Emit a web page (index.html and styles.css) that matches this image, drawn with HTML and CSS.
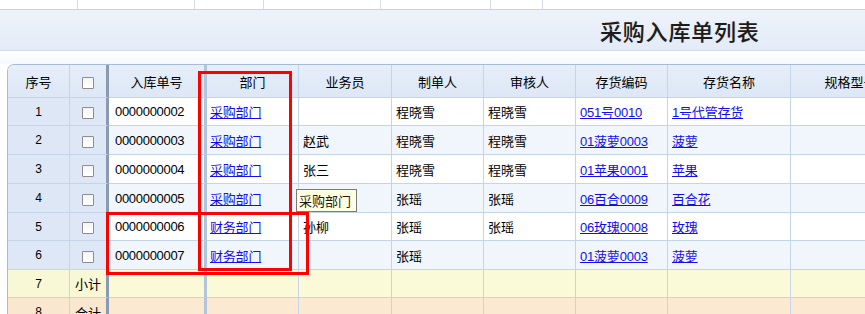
FILE: index.html
```html
<!DOCTYPE html>
<html lang="zh-CN">
<head>
<meta charset="utf-8">
<title>采购入库单列表</title>
<link rel="stylesheet" href="styles.css">
</head>
<body>
<div class="page">
  <div class="topstrip">
    <div class="ts c1"></div><div class="ts c2"></div><div class="ts c3"></div><div class="ts c4"></div><div class="ts c5"></div><div class="ts c6"></div><div class="ts rest"></div>
  </div>
  <div class="titlebar"><h1 class="title">采购入库单列表</h1></div>
  <div class="gap"></div>
  <div class="gridwrap">
    <table class="grid">
      <thead>
        <tr class="hrow">
          <th class="w-no">序号</th>
          <th class="w-cb sep-dark"><span class="cb"></span></th>
          <th class="w-code sep-light">入库单号</th>
          <th class="w-dept">部门</th>
          <th class="w-sales">业务员</th>
          <th class="w-maker">制单人</th>
          <th class="w-audit">审核人</th>
          <th class="w-inv">存货编码</th>
          <th class="w-name">存货名称</th>
          <th class="w-spec">规格型号</th>
        </tr>
      </thead>
      <tbody>
        <tr class="r odd h28">
          <td class="no">1</td><td class="cbc sep-dark"><span class="cb"></span></td>
          <td class="code sep-light">0000000002</td><td class="dept"><a href="#">采购部门</a></td>
          <td></td><td>程晓雪</td><td>程晓雪</td>
          <td><a href="#">051号0010</a></td><td><a href="#">1号代管存货</a></td><td></td>
        </tr>
        <tr class="r even h29">
          <td class="no">2</td><td class="cbc sep-dark"><span class="cb"></span></td>
          <td class="code sep-light">0000000003</td><td class="dept"><a href="#">采购部门</a></td>
          <td>赵武</td><td>程晓雪</td><td>程晓雪</td>
          <td><a href="#">01菠萝0003</a></td><td><a href="#">菠萝</a></td><td></td>
        </tr>
        <tr class="r odd h29">
          <td class="no">3</td><td class="cbc sep-dark"><span class="cb"></span></td>
          <td class="code sep-light">0000000004</td><td class="dept"><a href="#">采购部门</a></td>
          <td>张三</td><td>程晓雪</td><td>程晓雪</td>
          <td><a href="#">01苹果0001</a></td><td><a href="#">苹果</a></td><td></td>
        </tr>
        <tr class="r even h29">
          <td class="no">4</td><td class="cbc sep-dark"><span class="cb"></span></td>
          <td class="code sep-light">0000000005</td><td class="dept"><a href="#">采购部门</a></td>
          <td></td><td>张瑶</td><td>张瑶</td>
          <td><a href="#">06百合0009</a></td><td><a href="#">百合花</a></td><td></td>
        </tr>
        <tr class="r odd h28">
          <td class="no">5</td><td class="cbc sep-dark"><span class="cb"></span></td>
          <td class="code sep-light">0000000006</td><td class="dept"><a href="#">财务部门</a></td>
          <td>孙柳</td><td>张瑶</td><td>张瑶</td>
          <td><a href="#">06玫瑰0008</a></td><td><a href="#">玫瑰</a></td><td></td>
        </tr>
        <tr class="r even h29">
          <td class="no">6</td><td class="cbc sep-dark"><span class="cb"></span></td>
          <td class="code sep-light">0000000007</td><td class="dept"><a href="#">财务部门</a></td>
          <td></td><td>张瑶</td><td></td>
          <td><a href="#">01菠萝0003</a></td><td><a href="#">菠萝</a></td><td></td>
        </tr>
        <tr class="r sub h28">
          <td class="no">7</td><td class="cbc sep-dark">小计</td>
          <td class="sep-light"></td><td></td><td></td><td></td><td></td><td></td><td></td><td></td>
        </tr>
        <tr class="r total h29">
          <td class="no">8</td><td class="cbc sep-dark">合计</td>
          <td class="sep-light"></td><td></td><td></td><td></td><td></td><td></td><td></td><td></td>
        </tr>
      </tbody>
    </table>
  </div>
  <div class="mark mark-dept"></div>
  <div class="mark mark-fin"></div>
  <div class="tooltip">采购部门</div>
</div>
</body>
</html>
```
FILE: styles.css
```css
* { box-sizing: border-box; }
html, body { margin: 0; padding: 0; }
body {
  background: #ffffff;
  font-family: "Liberation Sans", "Noto Sans CJK SC", sans-serif;
  font-size: 13px;
  color: #000;
  overflow: hidden;
  width: 865px;
  height: 314px;
}
.page { position: relative; width: 865px; height: 314px; overflow: hidden; }

.topstrip { display: flex; height: 9px; background: #fff; }
.ts { height: 9px; border-right: 1px solid #d6dde7; flex: none; }
.c1 { width: 78px; }
.c2 { width: 117px; }
.c3 { width: 69px; }
.c4 { width: 117px; }
.c5 { width: 110px; }
.c6 { width: 52px; }
.ts.rest { flex: 1; border-right: none; }

.titlebar {
  height: 42px;
  border-top: 1px solid #c6d2e2;
  border-bottom: 1px solid #d3ddea;
  background: linear-gradient(#eef3fb, #e3ebf7);
  display: flex;
  align-items: center;
  padding-left: 600px;
}
.title {
  margin: 0;
  font-family: "Noto Sans CJK SC", sans-serif;
  font-size: 22px;
  font-weight: 500;
  color: #1c1c1c;
  line-height: 1;
  letter-spacing: 0.8px;
  text-shadow: 0 0 1px rgba(120,90,40,0.25);
}
.gap { height: 13px; background: linear-gradient(#ffffff, #f6f9fd); }

.gridwrap {
  margin-left: 7px;
  width: 920px;
  border: 1px solid #a7bbd3;
  border-right: none;
  border-bottom: none;
  border-top-left-radius: 7px;
  overflow: hidden;
}
.grid {
  border-collapse: separate;
  border-spacing: 0;
  table-layout: fixed;
  width: 903px;
}
.grid th, .grid td {
  border-right: 1px solid #c4d4e9;
  border-bottom: 1px solid #c4d4e9;
  padding: 0 4px;
  white-space: nowrap;
  overflow: hidden;
  vertical-align: middle;
}
.grid th {
  height: 33px;
  font-weight: normal;
  text-align: center;
  background: linear-gradient(#e6eefa, #dde7f5);
  font-family: "Noto Sans CJK SC", sans-serif;
}
.w-no { width: 62px; }
.w-cb { width: 39px; }
.w-code { width: 98px; }
.w-dept { width: 92px; }
.w-sales { width: 93px; }
.w-maker { width: 92px; }
.w-audit { width: 92px; }
.w-inv { width: 92px; }
.w-name { width: 123px; }
.w-spec { width: 120px; }

.grid th.sep-dark, .grid td.sep-dark { border-right: 3px solid #8a9ab0; }
.grid th.sep-light, .grid td.sep-light { border-right: 3px solid #b3c5dc; }

.h28 td { height: 28px; }
.h29 td { height: 29px; }

.r.odd td { background: #ffffff; }
.r.even td { background: #f1f6fd; }
.r.sub td { background: #fafad8; }
.r.total td { background: #fbe9d2; }

.grid td.no { text-align: center; background: #dde7f5; font-size: 12px; }
.grid td.cbc { text-align: center; background: #dde7f5; font-family: "Noto Sans CJK SC", sans-serif; padding: 0 2px; }
.r.sub td.no, .r.sub td.cbc { background: #f8f8d6; }
.r.total td.no, .r.total td.cbc { background: #fae7cf; }

.grid td.code { padding-left: 6px; letter-spacing: -0.3px; }
.grid td.dept { padding-left: 3px; }

.cb {
  display: inline-block;
  width: 12px;
  height: 12px;
  border: 1px solid #8e8e8e;
  border-radius: 1px;
  background: linear-gradient(#f4f4f4, #ffffff);
  vertical-align: middle;
}
.grid a { color: #1010ee; text-decoration: underline; letter-spacing: -0.2px; }

.mark { position: absolute; border: 3px solid #ff0000; pointer-events: none; }
.mark-dept { left: 198px; top: 71px; width: 94px; height: 200px; }
.mark-fin { left: 106px; top: 212px; width: 203px; height: 63px; }

.tooltip {
  position: absolute;
  left: 296px;
  top: 189px;
  width: 61px;
  height: 23px;
  border: 1px solid #7a7a7a;
  background: #ffffe1;
  font-family: "Noto Sans CJK SC", sans-serif;
  font-size: 13px;
  line-height: 21px;
  padding-left: 2px;
  color: #1a1a1a;
}
```
